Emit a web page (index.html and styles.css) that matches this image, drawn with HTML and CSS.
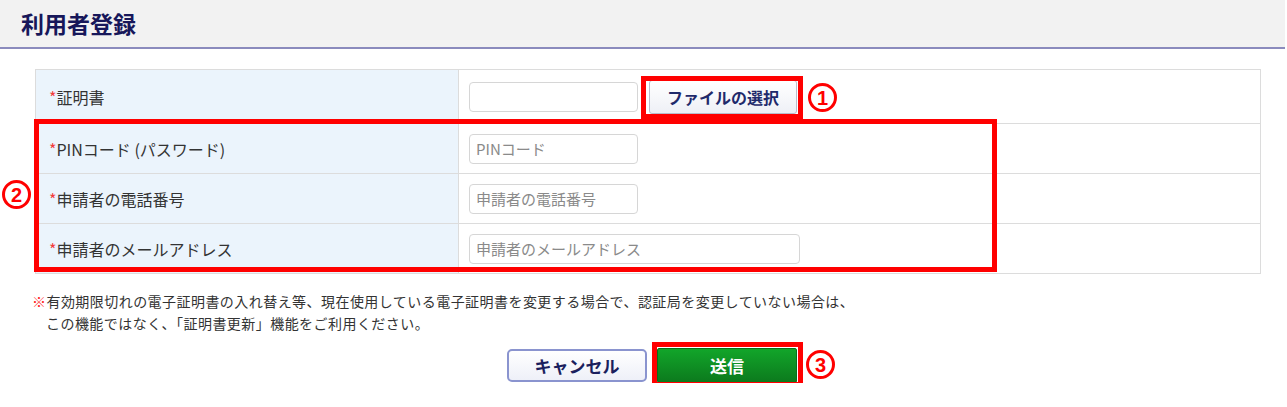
FILE: index.html
```html
<!DOCTYPE html>
<html lang="ja">
<head>
  <meta charset="UTF-8">
  <meta name="viewport" content="width=device-width, initial-scale=1">
  <title>利用者登録</title>
  <link rel="stylesheet" href="styles.css">
</head>
<body>

  <header class="page-head">
    <h1>利用者登録</h1>
  </header>

  <main class="content">
    <table class="form-table">
      <tr class="row-file">
        <th><span class="req">*</span>証明書</th>
        <td>
          <div class="file-field">
            <input type="text" class="text-input">
            <button class="file-btn">ファイルの選択</button>
          </div>
        </td>
      </tr>
      <tr>
        <th><span class="req">*</span>PINコード (パスワード)</th>
        <td><input type="password" class="text-input" placeholder="PINコード"></td>
      </tr>
      <tr>
        <th><span class="req">*</span>申請者の電話番号</th>
        <td><input type="text" class="text-input" placeholder="申請者の電話番号"></td>
      </tr>
      <tr>
        <th><span class="req">*</span>申請者のメールアドレス</th>
        <td><input type="text" class="text-input wide" placeholder="申請者のメールアドレス"></td>
      </tr>
    </table>

    <p class="note"><span class="mark">※</span>有効期限切れの電子証明書の入れ替え等、現在使用している電子証明書を変更する場合で、認証局を変更していない場合は、<br>この機能ではなく、「証明書更新」機能をご利用ください。</p>

    <div class="actions">
      <button class="btn btn-cancel">キャンセル</button>
      <button class="btn btn-send">送信</button>
    </div>
  </main>

  <!-- annotation overlays -->
  <div class="callout box-file"></div>
  <div class="callout box-fields"></div>
  <div class="callout box-send"></div>
  <span class="num num-1">1</span>
  <span class="num num-2">2</span>
  <span class="num num-3">3</span>

</body>
</html>
```

FILE: styles.css
```css
* {
  box-sizing: border-box;
}

body {
  margin: 0;
  position: relative;
  font-family: "Noto Sans CJK JP", "Noto Sans", sans-serif;
  color: #333;
  background: #fff;
}

.page-head {
  height: 49px;
  margin-right: 2px;
  background: #f2f2f2;
  border-bottom: 2px solid #8b8bbd;
  display: flex;
  align-items: center;
  padding-left: 21px;
}

.page-head h1 {
  margin: 0;
  font-size: 23px;
  font-weight: bold;
  color: #17175a;
  line-height: 1;
}

.content {
  padding: 20px 26px 0 35px;
}

.form-table {
  width: 100%;
  border-collapse: collapse;
  border: 1px solid #dcdcdc;
}

.form-table th,
.form-table td {
  height: 50px;
  border: 1px solid #dcdcdc;
  padding: 0 10px;
  vertical-align: middle;
  line-height: 1;
}

.form-table .row-file th,
.form-table .row-file td {
  height: 54px;
}

.form-table th {
  width: 423px;
  background: #ebf4fc;
  text-align: left;
  font-weight: normal;
  font-size: 16px;
  padding-left: 13px;
  color: #333;
}

.req {
  color: #f23c3c;
}

.file-field {
  display: flex;
  align-items: center;
  gap: 11px;
}

.text-input {
  display: block;
  width: 169px;
  height: 30px;
  border: 1px solid #d6d6d6;
  border-radius: 4px;
  padding: 0 6px;
  font-family: inherit;
  font-size: 15px;
  color: #555;
  background: #fff;
}

.text-input::placeholder {
  color: #8a8a8a;
}

.text-input.wide {
  width: 331px;
}

.file-btn {
  width: 148px;
  height: 34px;
  margin-top: 1px;
  border: 1px solid #b9bccb;
  border-radius: 3px;
  background: linear-gradient(#ffffff, #eef0f6);
  font-family: inherit;
  font-size: 16px;
  font-weight: bold;
  color: #1f2a6b;
  cursor: pointer;
}

.note {
  margin: 16px 0 0 -3px;
  padding-left: 14px;
  text-indent: -14px;
  font-size: 14px;
  letter-spacing: 0.45px;
  line-height: 22px;
  color: #333;
}

.mark {
  color: #f22;
}

.actions {
  display: flex;
  justify-content: center;
  align-items: center;
  gap: 10px;
  margin-top: 14px;
  padding-left: 8px;
}

.btn {
  width: 140px;
  font-family: inherit;
  font-size: 17px;
  font-weight: bold;
  cursor: pointer;
}

.btn-cancel {
  height: 33px;
  border: 2px solid #8a94cf;
  border-radius: 5px;
  background: linear-gradient(#ffffff, #eef0f8);
  color: #1b1f5e;
}

.btn-send {
  height: 35px;
  border: 1px solid #0b6d1a;
  border-radius: 2px;
  background: linear-gradient(#12a52a, #0c7a1d);
  color: #fff;
}

/* annotations */
.callout {
  position: absolute;
  border: 5px solid #ff0000;
  pointer-events: none;
}

.box-file {
  left: 641px;
  top: 76px;
  width: 162px;
  height: 43px;
}

.box-fields {
  left: 34px;
  top: 119px;
  width: 963px;
  height: 153px;
}

.box-send {
  left: 652px;
  top: 342px;
  width: 151px;
  height: 45px;
}

.num {
  position: absolute;
  width: 29px;
  height: 29px;
  border: 3px solid #ff0000;
  border-radius: 50%;
  display: flex;
  align-items: center;
  justify-content: center;
  font-family: "Liberation Sans", sans-serif;
  font-size: 20px;
  font-weight: bold;
  color: #ff0000;
  line-height: 1;
}

.num-1 {
  left: 808px;
  top: 83px;
}

.num-2 {
  left: 2px;
  top: 180px;
}

.num-3 {
  left: 806px;
  top: 350px;
}
```
